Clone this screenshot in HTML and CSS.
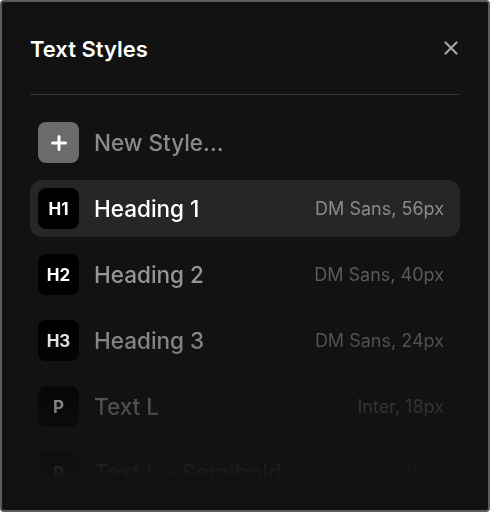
FILE: index.html
```html
<!DOCTYPE html>
<html lang="en">
<head>
    <meta charset="UTF-8">
    <meta name="viewport" content="width=device-width, initial-scale=1.0">
    <title>Text Styles</title>
    <link rel="stylesheet" href="styles.css">
</head>
<body>
    <div class="panel">
        <div class="panel-head">
            <h2 class="panel-title">Text Styles</h2>
            <button class="close-btn" aria-label="Close">
                <svg width="14" height="14" viewBox="0 0 14 14">
                    <path d="M1.5 1.5 L12.5 12.5 M12.5 1.5 L1.5 12.5" stroke="currentColor" stroke-width="2.2" stroke-linecap="round"/>
                </svg>
            </button>
        </div>
        <ul class="style-list">
            <li class="style-row new-row">
                <span class="tag tag-add">
                    <svg width="16" height="16" viewBox="0 0 16 16">
                        <path d="M8 1.5 V14.5 M1.5 8 H14.5" stroke="#fff" stroke-width="3" stroke-linecap="round"/>
                    </svg>
                </span>
                <span class="style-name">New Style...</span>
            </li>
            <li class="style-row active">
                <span class="tag">H1</span>
                <span class="style-name">Heading 1</span>
                <span class="style-meta">DM Sans, 56px</span>
            </li>
            <li class="style-row">
                <span class="tag">H2</span>
                <span class="style-name">Heading 2</span>
                <span class="style-meta">DM Sans, 40px</span>
            </li>
            <li class="style-row">
                <span class="tag">H3</span>
                <span class="style-name">Heading 3</span>
                <span class="style-meta">DM Sans, 24px</span>
            </li>
            <li class="style-row">
                <span class="tag">P</span>
                <span class="style-name">Text L</span>
                <span class="style-meta">Inter, 18px</span>
            </li>
            <li class="style-row">
                <span class="tag">P</span>
                <span class="style-name">Text L - Semibold</span>
                <span class="style-meta">Inter, 18px</span>
            </li>
        </ul>
    </div>
</body>
</html>
```

FILE: styles.css
```css
* {
    box-sizing: border-box;
}
body {
    margin: 0;
    background: #fff;
    font-family: Inter, "Noto Sans", sans-serif;
}
.panel {
    width: 490px;
    height: 512px;
    background: #121212;
    border: 2px solid #5c5c5c;
    border-radius: 4px;
    padding: 0 28px;
    overflow: hidden;
}
.panel-head {
    height: 93px;
    display: flex;
    align-items: center;
    justify-content: space-between;
    border-bottom: 1px solid #333;
}
.panel-title {
    margin: 0;
    color: #fff;
    font-size: 22px;
    font-weight: 600;
    padding-top: 2px;
}
.close-btn {
    background: none;
    border: none;
    padding: 0;
    margin-right: 2px;
    color: #a6a6a6;
    display: flex;
    cursor: pointer;
}
.style-list {
    list-style: none;
    margin: 0;
    padding: 19px 0 0;
    display: flex;
    flex-direction: column;
    gap: 9px;
    /* rows fade out towards the bottom edge */
    -webkit-mask-image: linear-gradient(to bottom, #000 226px, transparent 385px);
    mask-image: linear-gradient(to bottom, #000 226px, transparent 385px);
}
.style-row {
    height: 57px;
    display: flex;
    align-items: center;
    gap: 15px;
    padding: 0 16px 0 8px;
    border-radius: 12px;
    flex-shrink: 0;
}
.style-row.active {
    background: #262626;
}
.tag {
    width: 41px;
    height: 41px;
    border-radius: 8px;
    background: #000;
    color: #fff;
    font-size: 17px;
    font-weight: 700;
    display: flex;
    align-items: center;
    justify-content: center;
    flex-shrink: 0;
}
.tag-add {
    background: #6b6b6b;
}
.style-name {
    flex: 1;
    font-size: 22.5px;
    font-weight: 500;
    color: #959595;
    white-space: nowrap;
}
.style-row.active .style-name {
    color: #fff;
}
.new-row .style-name {
    color: #8a8a8a;
}
.style-meta {
    font-size: 18px;
    color: #5a5a5a;
    white-space: nowrap;
}
.style-row.active .style-meta {
    color: #8a8a8a;
}
```
